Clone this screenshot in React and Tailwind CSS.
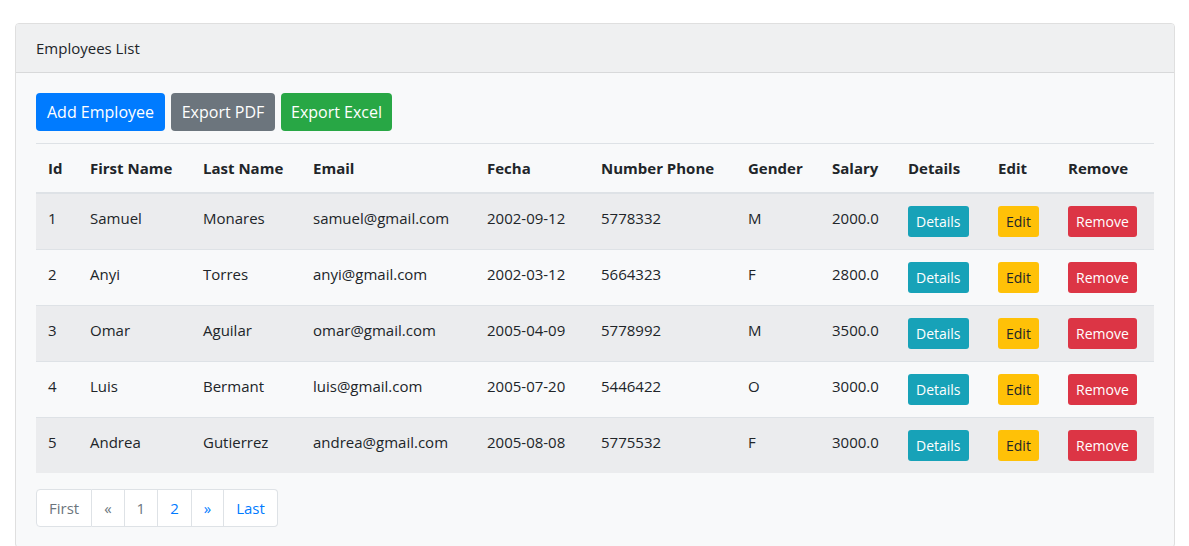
import React from "react";

const employees = [
  { id: 1, first: "Samuel", last: "Monares", email: "samuel@gmail.com", fecha: "2002-09-12", phone: "5778332", gender: "M", salary: "2000.0" },
  { id: 2, first: "Anyi", last: "Torres", email: "anyi@gmail.com", fecha: "2002-03-12", phone: "5664323", gender: "F", salary: "2800.0" },
  { id: 3, first: "Omar", last: "Aguilar", email: "omar@gmail.com", fecha: "2005-04-09", phone: "5778992", gender: "M", salary: "3500.0" },
  { id: 4, first: "Luis", last: "Bermant", email: "luis@gmail.com", fecha: "2005-07-20", phone: "5446422", gender: "O", salary: "3000.0" },
  { id: 5, first: "Andrea", last: "Gutierrez", email: "andrea@gmail.com", fecha: "2005-08-08", phone: "5775532", gender: "F", salary: "3000.0" },
];

const headers = ["Id", "First Name", "Last Name", "Email", "Fecha", "Number Phone", "Gender", "Salary", "Details", "Edit", "Remove"];
const widths = [42, 113, 110, 174, 114, 147, 84, 76, 90, 70, 98];

function SmallBtn({ className, children }) {
  return (
    <button className={`h-[31px] px-2 rounded-[3px] text-[14px] leading-[21px] ${className}`}>
      {children}
    </button>
  );
}

export default function App() {
  return (
    <div
      className="min-h-screen bg-white pl-[15px] pr-[14px] pt-[23px] text-[#212529] text-[15px] leading-6"
      style={{ fontFamily: '"Open Sans", "Noto Sans", Arial, sans-serif' }}
    >
      <div className="border border-[#dfdfdf] rounded-[4px] bg-[#f8f9fa] overflow-hidden">
        {/* Header */}
        <div className="px-5 py-3 bg-[#eff0f1] border-b border-[#d8d9da]">Employees List</div>

        {/* Body */}
        <div className="p-5">
          <div className="flex gap-[6px]">
            <button className="h-[38px] w-[129px] rounded-[4px] bg-[#007bff] text-white text-[16px]">Add Employee</button>
            <button className="h-[38px] w-[104px] rounded-[4px] bg-[#6c757d] text-white text-[16px]">Export PDF</button>
            <button className="h-[38px] w-[111px] rounded-[4px] bg-[#28a745] text-white text-[16px]">Export Excel</button>
          </div>

          <table className="mt-3 w-[1118px] table-fixed border-collapse">
            <colgroup>
              {widths.map((w, i) => (
                <col key={i} style={{ width: w }} />
              ))}
            </colgroup>
            <thead>
              <tr className="border-t border-[#dee2e6] border-b-2">
                {headers.map((h) => (
                  <th key={h} className="px-3 py-3 text-left font-bold align-bottom whitespace-nowrap">
                    {h}
                  </th>
                ))}
              </tr>
            </thead>
            <tbody>
              {employees.map((e, i) => (
                <tr
                  key={e.id}
                  className={`border-t border-[#dee2e6] ${i % 2 === 0 ? "bg-[#ebecee]" : "bg-[#f8f9fa]"}`}
                >
                  <td className="px-3 py-3 align-top">{e.id}</td>
                  <td className="px-3 py-3 align-top">{e.first}</td>
                  <td className="px-3 py-3 align-top">{e.last}</td>
                  <td className="px-3 py-3 align-top">{e.email}</td>
                  <td className="px-3 py-3 align-top">{e.fecha}</td>
                  <td className="px-3 py-3 align-top">{e.phone}</td>
                  <td className="px-3 py-3 align-top">{e.gender}</td>
                  <td className="px-3 py-3 align-top">{e.salary}</td>
                  <td className="px-3 py-3 align-top">
                    <SmallBtn className="bg-[#17a2b8] text-white">Details</SmallBtn>
                  </td>
                  <td className="px-3 py-3 align-top">
                    <SmallBtn className="bg-[#ffc107] text-[#212529]">Edit</SmallBtn>
                  </td>
                  <td className="px-3 py-3 align-top">
                    <SmallBtn className="bg-[#dc3545] text-white">Remove</SmallBtn>
                  </td>
                </tr>
              ))}
            </tbody>
          </table>

          {/* Pagination */}
          <div className="mt-4 flex">
            <span className="h-[38px] px-3 flex items-center bg-white border border-[#dee2e6] rounded-l-[4px] text-[#6c757d]">First</span>
            <span className="h-[38px] px-3 flex items-center bg-white border border-l-0 border-[#dee2e6] text-[#6c757d]">«</span>
            <span className="h-[38px] px-3 flex items-center bg-white border border-l-0 border-[#dee2e6] text-[#6c757d]">1</span>
            <span className="h-[38px] px-3 flex items-center bg-white border border-l-0 border-[#dee2e6] text-[#007bff]">2</span>
            <span className="h-[38px] px-3 flex items-center bg-white border border-l-0 border-[#dee2e6] text-[#007bff]">»</span>
            <span className="h-[38px] px-3 flex items-center bg-white border border-l-0 border-[#dee2e6] rounded-r-[4px] text-[#007bff]">Last</span>
          </div>
        </div>
      </div>
    </div>
  );
}
